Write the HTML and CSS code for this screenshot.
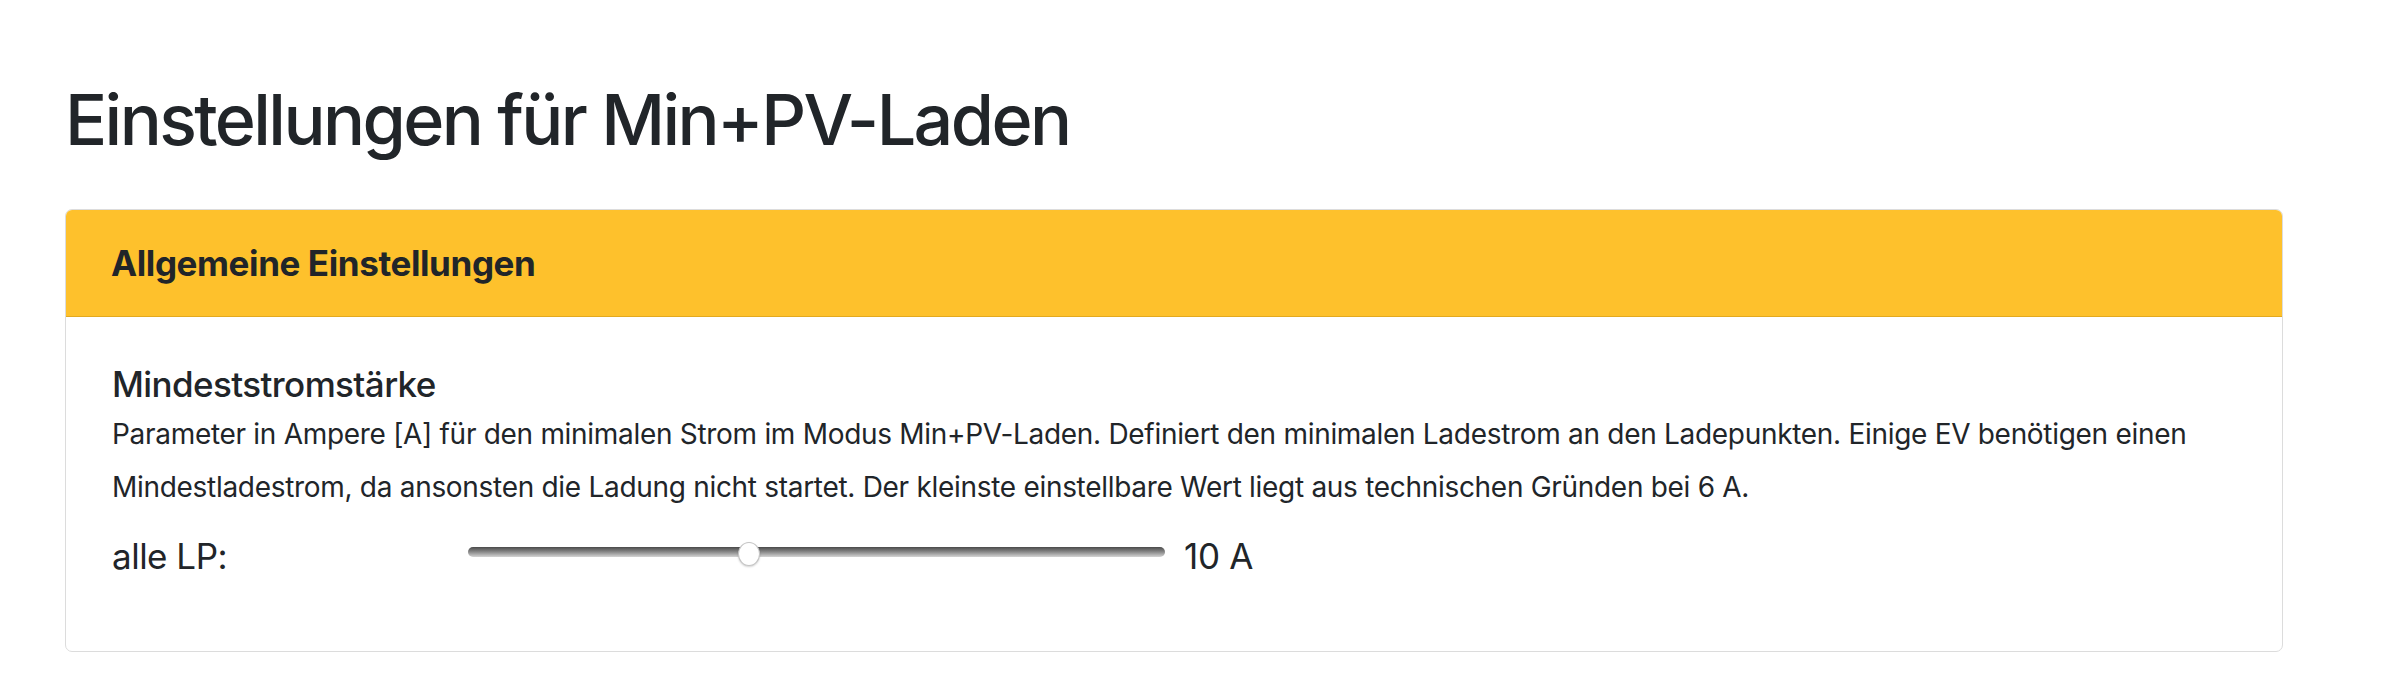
FILE: index.html
```html
<!DOCTYPE html>
<html lang="de">
<head>
<meta charset="utf-8">
<title>Einstellungen für Min+PV-Laden</title>
<link rel="stylesheet" href="styles.css">
</head>
<body>
<div class="page">
  <h1 class="title">Einstellungen für Min+PV-Laden</h1>
  <div class="card">
    <div class="card-header">Allgemeine Einstellungen</div>
    <div class="card-body">
      <h5 class="setting-title">Mindeststromstärke</h5>
      <p class="setting-desc">Parameter in Ampere [A] für den minimalen Strom im Modus Min+PV-Laden. Definiert den minimalen Ladestrom an den Ladepunkten. Einige EV benötigen einen Mindestladestrom, da ansonsten die Ladung nicht startet. Der kleinste einstellbare Wert liegt aus technischen Gründen bei 6 A.</p>
      <div class="form-row">
        <label class="row-label" for="minCurrent">alle LP:</label>
        <div class="slider-wrap">
          <input class="slider" id="minCurrent" type="range" min="6" max="16" step="1" value="10">
        </div>
        <span class="row-value">10 A</span>
      </div>
    </div>
  </div>
</div>
</body>
</html>
```
FILE: styles.css
```css
html, body {
  margin: 0;
  padding: 0;
  background: #ffffff;
}
body {
  font-family: Inter, "Noto Sans", "Liberation Sans", sans-serif;
  color: #212529;
}
.page {
  padding: 78px 101px 0 65px;
}
.title {
  margin: 0 0 47px 0;
  font-size: 70px;
  line-height: 84px;
  font-weight: 500;
  letter-spacing: -2.6px;
}
.card {
  border: 1px solid #dcdcdc;
  border-radius: 7px;
  overflow: hidden;
}
.card-header {
  background: #fec12c;
  border-bottom: 1px solid #e3a91f;
  padding: 35px 45px;
  font-size: 35px;
  line-height: 36px;
  font-weight: 700;
  letter-spacing: -0.4px;
}
.card-body {
  padding: 46px 45px 74px 46px;
}
.setting-title {
  margin: 0 0 3px 0;
  font-size: 35px;
  line-height: 42px;
  font-weight: 500;
  letter-spacing: -0.6px;
}
.setting-desc {
  margin: 0 0 21px 0;
  font-size: 28px;
  line-height: 53px;
  font-weight: 400;
  letter-spacing: -0.3px;
  max-width: 2120px;
}
.form-row {
  display: flex;
  align-items: flex-start;
  height: 42px;
}
.row-label {
  width: 356px;
  font-size: 35px;
  line-height: 42px;
  letter-spacing: -0.5px;
}
.slider-wrap {
  width: 697px;
  height: 10px;
  margin-top: 12px;
  display: flex;
}
.slider {
  -webkit-appearance: none;
  appearance: none;
  width: 697px;
  height: 10px;
  margin: 0;
  padding: 0;
  background: transparent;
  outline: none;
}
.slider::-webkit-slider-runnable-track {
  height: 10px;
  border-radius: 5px;
  background: linear-gradient(to bottom, #4a4a4a 0%, #8a8a8a 50%, #d4d4d4 100%);
}
.slider::-webkit-slider-thumb {
  -webkit-appearance: none;
  appearance: none;
  width: 22px;
  height: 24px;
  margin-top: -5px;
  border-radius: 50%;
  background: #ffffff;
  border: 1px solid #c4c4c4;
  box-shadow: 0 1px 2px rgba(0, 0, 0, 0.18);
}
.row-value {
  margin-left: 19px;
  font-size: 35px;
  line-height: 42px;
  letter-spacing: -0.3px;
}
```
